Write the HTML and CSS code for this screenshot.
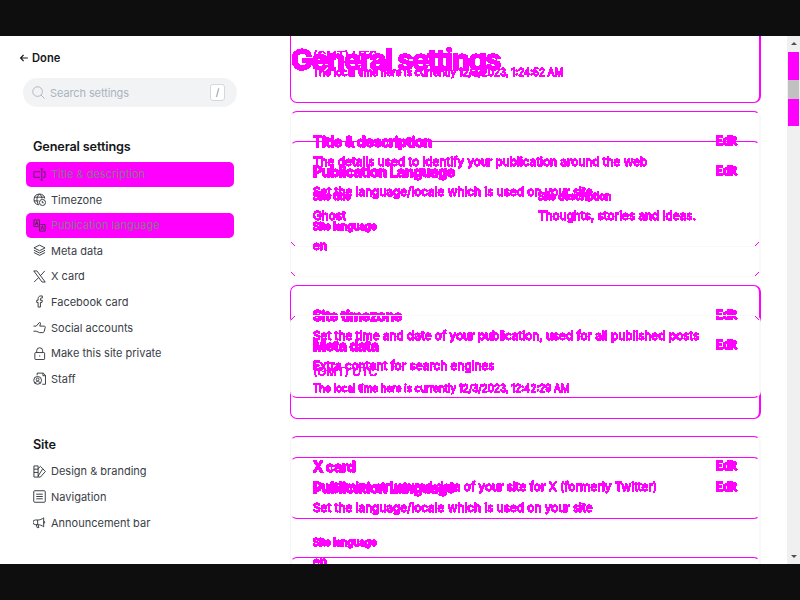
FILE: index.html
```
<!DOCTYPE html>
<html lang="en">
<head>
<meta charset="utf-8">
<title>General settings</title>
<link rel="stylesheet" href="styles.css">
</head>
<body>
<svg class="defs" width="0" height="0"><filter id="hard" x="0" y="0" width="100%" height="100%" color-interpolation-filters="sRGB"><feComponentTransfer><feFuncA type="discrete" tableValues="0 1 1 1 1 1 1 1 1 1 1 1 1 1 1 1"/></feComponentTransfer></filter></svg>
<div class="window">
  <nav class="sidebar">
    <div class="done"><svg class="arrow" viewBox="0 0 8 8"><path d="M3.6 .8.6 4l3 3.2M.8 4h7"/></svg><span>Done</span></div>
    <div class="search">
      <svg class="ico" viewBox="0 0 14 14"><circle cx="6" cy="6" r="5.2"/><path d="M9.7 9.7l3.8 3.8"/></svg>
      <span class="placeholder">Search settings</span><kbd>/</kbd>
    </div>
    <h2>General settings</h2>
    <ul>
      <li class="changed"><svg class="ico" viewBox="0 0 14 14"><path d="M7.5 4H1v6h6.500M11 4h2v6h-2M9.500 1v12M8 1h3M8 13h3"/></svg><span>Title &amp; description</span></li>
      <li><svg class="ico" viewBox="0 0 14 14"><path d="M6 12.700A5.800 5.800 0 1 1 12.700 6M1.500 4.500h11M1 8.500h5M7 1C3.500 4 3.500 9 6 12.700M7 1c1.700 1.400 2.500 3 2.600 5"/><circle cx="10.200" cy="10.200" r="3.300"/><path d="M10 8.500v2h1.500"/></svg><span>Timezone</span></li>
      <li class="changed"><svg class="ico" viewBox="0 0 14 14"><path d="M1 1h6v7H1zM8 6h5v7H7V9M2.500 6.500L4 2.500l1.500 4M3 5h2M8.500 11.500l1.500-4 1.500 4"/></svg><span>Publication language</span></li>
      <li><svg class="ico" viewBox="0 0 14 14"><path d="M7 1.200l6 3-6 3-6-3zM1 6.700l6 3 6-3M1 9.200l6 3 6-3"/></svg><span>Meta data</span></li>
      <li><svg class="ico" viewBox="0 0 14 14"><path d="M.800 1h3.400l9 12H9.800zM12.700 1L8 6.200M6 8.200L1.200 13"/></svg><span>X card</span></li>
      <li><svg class="ico" viewBox="0 0 14 14"><path d="M5.500 13V8H4V5.700h1.500V4c0-2 1.300-3 3-3H10v2.300H9c-.800 0-1 .400-1 1v1.400h2L9.700 8H8v5z"/></svg><span>Facebook card</span></li>
      <li><svg class="ico" viewBox="0 0 14 14"><path d="M.500 5.500h3L6.500 2c1-.800 2 0 1.500 1.200L7.300 5.500H12c1.200 0 1.500 1 1 2l-1 4c-.200.700-.700 1-1.400 1H7L3.500 11h-3"/></svg><span>Social accounts</span></li>
      <li><svg class="ico" viewBox="0 0 14 14"><rect x="2" y="6" width="10.500" height="7.500" rx=".8"/><path d="M4 6V4a3.200 3.200 0 0 1 6.400 0v2M7.200 9v1.300"/></svg><span>Make this site private</span></li>
      <li><svg class="ico" viewBox="0 0 14 14"><path d="M4.500 3.500V1.200h6.500l2.500 2.500v9.500H10M10.700 1.200V4h2.800"/><circle cx="5" cy="9" r="4.200"/><circle cx="5" cy="8" r="1.500"/><path d="M2.200 12c.8-2.300 4.800-2.300 5.600 0"/></svg><span>Staff</span></li>
    </ul>
    <h2 class="second">Site</h2>
    <ul>
      <li><svg class="ico" viewBox="0 0 14 14"><path d="M1 1h4.500v12H1zM1 4.500h4.500M1 8h4.500M5.500 4L8 1.500 10.500 4l-5 8M8 13l5.300-6-2.500-2.700M5.500 13H8"/></svg><span>Design &amp; branding</span></li>
      <li><svg class="ico" viewBox="0 0 14 14"><rect x=".8" y=".8" width="12.400" height="12.400" rx="1"/><path d="M3.500 4.500h7M3.500 7h7M3.500 9.500h7"/></svg><span>Navigation</span></li>
      <li><svg class="ico" viewBox="0 0 14 14"><path d="M5 4.300H2.500a2 2 0 0 0 0 5H5zM5 4.300c2.500 0 4.500-.8 6.500-2.300v9.600C9.500 10.200 7.500 9.300 5 9.300M3.500 9.500l1 3h1.800l-.8-3M11.500 5.500c1.500 0 1.500 2.600 0 2.600"/></svg><span>Announcement bar</span></li>
    </ul>
  </nav>

  <main class="stage">
    <section class="layer before">
      <h1 class="ink">General settings</h1>
      <article class="card tall faintbottom">
        <div class="ink head"><h3>Title &amp; description</h3><b>Edit</b></div>
        <p class="ink desc">The details used to identify your publication around the web</p>
        <div class="ink fields"><div><h4>Site title</h4><p>Ghost</p></div><div><h4>Site description</h4><p>Thoughts, stories and ideas.</p></div></div>
      </article>
      <article class="card zone">
        <div class="ink head"><h3>Site timezone</h3><b>Edit</b></div>
        <p class="ink desc">Set the time and date of your publication, used for all published posts</p>
        <p class="ink gmt">(GMT) UTC</p>
        <p class="ink local">The local time here is currently 12/3/2023, 12:42:29 AM</p>
      </article>
      <article class="card tall">
        <div class="ink head"><h3>Publication Language</h3><b>Edit</b></div>
        <p class="ink desc">Set the language/locale which is used on your site</p>
        <div class="ink fields"><div><h4>Site language</h4><p>en</p></div></div>
      </article>
    </section>

    <section class="layer after">
      <article class="card zone cut">
        <p class="ink gmt">(GMT) UTC</p>
        <p class="ink local">The local time here is currently 12/3/2023, 1:24:52 AM</p>
      </article>
      <article class="card tall faintbottom">
        <div class="ink head"><h3>Publication Language</h3><b>Edit</b></div>
        <p class="ink desc">Set the language/locale which is used on your site</p>
        <div class="ink fields"><div><h4>Site language</h4><p>en</p></div></div>
      </article>
      <article class="card short fainttop">
        <div class="ink head"><h3>Meta data</h3><b>Edit</b></div>
        <p class="ink desc">Extra content for search engines</p>
      </article>
      <article class="card short">
        <div class="ink head"><h3>X card</h3><b>Edit</b></div>
        <p class="ink desc">Customize structured data of your site for X (formerly Twitter)</p>
      </article>
      <article class="card short"></article>
    </section>
  </main>

  <div class="scrollbar">
    <i class="up"></i>
    <div class="thumb"><i></i></div>
    <i class="down"></i>
  </div>
</div>
</body>
</html>
```
FILE: styles.css
```
* { box-sizing: border-box; margin: 0; padding: 0; }
body { width: 800px; height: 600px; overflow: hidden; padding: 36px 0; background: #0e0e0e; font-family: Inter, "Liberation Sans", sans-serif; color: #15171a; }
.defs { position: absolute; }
.window { display: flex; height: 528px; background: #fff; overflow: hidden; }
.sidebar { width: 290px; flex: none; padding: 14px 0 0 20px; }
.done { display: flex; align-items: center; gap: 4px; height: 16px; font-size: 11.2px; font-weight: 600; }
.arrow { width: 8px; height: 8px; fill: none; stroke: #15171a; stroke-width: 1.2; }
.search { display: flex; align-items: center; width: 214px; height: 29px; margin: 12px 0 0 3px; padding: 0 12px 0 9px; border-radius: 15px; background: #f1f3f4; }
.ico { width: 13px; height: 13px; flex: none; fill: none; stroke: #303438; stroke-width: 1; }
.search .ico { stroke: #abb4be; }
.placeholder { flex: 1; margin-left: 5px; font-size: 11px; letter-spacing: -.27px; color: #abb4be; letter-spacing: -.1px; }
kbd { width: 15px; height: 17px; border: 1px solid #d5d9de; border-radius: 3px; background: #fff; font: 10px/14px Inter, sans-serif; text-align: center; color: #7c8b9a; }
.sidebar h2 { height: 18px; margin: 31px 0 6px 13px; font-size: 12.7px; line-height: 18px; font-weight: 600; letter-spacing: -.15px; }
.sidebar h2.second { margin-top: 44.400px; margin-bottom: 5.700px; }
.sidebar ul { list-style: none; margin: -.5px 0 0 6px; width: 208px; }
.sidebar li { display: flex; align-items: center; gap: 5px; height: 25px; margin-bottom: .6px; padding-left: 7px; border-radius: 5px; font-size: 11px; color: #394047; }
.sidebar li.changed { background: #f0f; color: #857a85; }
.changed .ico { stroke: #4a304a; }

.stage { position: relative; width: 471px; height: 528px; flex: none; }
.layer { position: absolute; inset: 0; display: flex; flex-direction: column; color: #f0f; }
.ink { filter: url(#hard); }
h1 { flex: none; height: 75px; padding: 5px 0 0 1px; font-size: 29px; line-height: 38px; font-weight: 700; letter-spacing: -1.4px; -webkit-text-stroke: .7px #f0f; }
.card { position: relative; flex: none; margin-bottom: 38px; padding: 21px 22px 0; border: 1px solid #f0f; border-left-color: #f5f5f6; border-right: 2px solid #f8f8f9; border-radius: 7px; }
.tall { height: 136px; }
.short { height: 83px; }
.zone { height: 134px; border-left: 1px solid #f0f; border-right: 2px solid #f0f; }
.cut { height: 82px; margin-top: -15px; padding-top: 25px; }
.cut .gmt { margin-top: 0; }
.faintbottom { border-bottom-color: #f8f8f9; }
.fainttop { border-top-color: #f8f8f9; }
.faintbottom::after, .fainttop::after {
  content: ""; position: absolute; left: 0; right: 0; height: 4px;
  background:
    linear-gradient(var(--a), transparent 44%, #f0f 44% 58%, transparent 58%) left / 4px 4px no-repeat,
    linear-gradient(var(--b), transparent 44%, #f0f 44% 58%, transparent 58%) right / 4px 4px no-repeat;
}
.faintbottom::after { bottom: 0; --a: 45deg; --b: -45deg; }
.fainttop::after { top: 0; --a: 135deg; --b: -135deg; }
.head { display: flex; justify-content: space-between; height: 18px; font-size: 11.5px; line-height: 16px; }
.head b { font-weight: 700; letter-spacing: -.1px; -webkit-text-stroke: .4px #f0f; }
h3 { font-size: 14px; line-height: 17px; font-weight: 700; letter-spacing: -.3px; -webkit-text-stroke: .5px #f0f; }
.desc { margin-top: 2px; font-size: 11.8px; line-height: 18px; white-space: nowrap; }
.fields { display: flex; margin-top: 17px; }
.fields > div { flex: none; width: 225px; }
h4 { font-size: 9.900px; line-height: 16px; font-weight: 600; letter-spacing: -.1px; -webkit-text-stroke: .4px #f0f; }
.fields p { margin-top: 3px; font-size: 11.800px; line-height: 18px; white-space: nowrap; }
.gmt { margin-top: 18px; font-size: 11.900px; line-height: 18px; }
.local { font-size: 9.800px; line-height: 16px; }
.desc, .fields p, .local { -webkit-text-stroke: .4px #f0f; }

.scrollbar { width: 13px; margin-left: auto; background: #f0f0f0; display: flex; flex-direction: column; align-items: center; padding: 6px 0; }
.up { border: 3px solid transparent; border-top: 0; border-bottom: 3px solid #505050; }
.thumb { width: 11px; height: 74px; margin-top: 7px; padding-top: 28px; background: #f0f; }
.thumb i { display: block; height: 19px; background: #c1c1c1; }
.down { margin-top: auto; border: 3px solid transparent; border-bottom: 0; border-top: 3px solid #505050; }
```
